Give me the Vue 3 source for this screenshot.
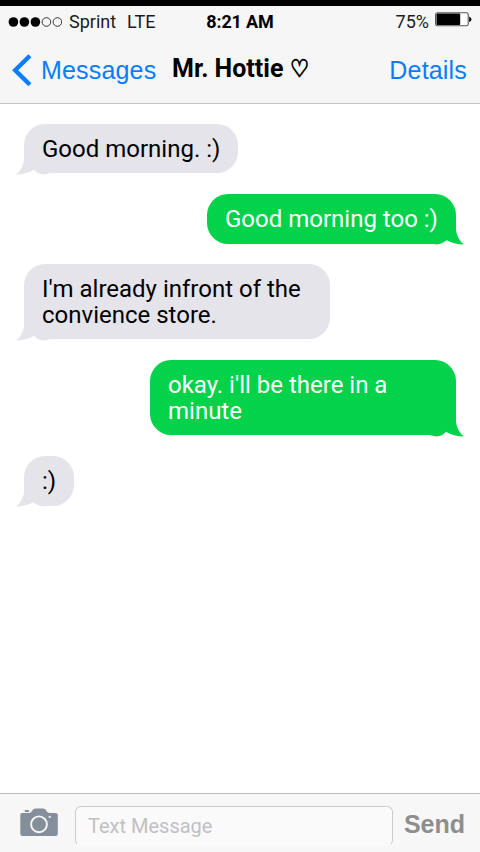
<script setup>
const messages = [
  { side: 'in', lines: ['Good morning. :)'], width: 214 },
  { side: 'out', lines: ['Good morning too :)'], width: 249, tall: true },
  { side: 'in', lines: ["I'm already infront of the", 'convience store.'], width: 306 },
  { side: 'out', lines: ["okay. i'll be there in a", 'minute'], width: 306 },
  { side: 'in', lines: [':)'], width: 50, tall: true },
]
</script>

<template>
  <div class="phone">
    <header class="header">
      <div class="status">
        <div class="carrier">
          <svg class="signal" width="54" height="12" viewBox="0 0 54 12">
            <circle cx="5.4" cy="6" r="4.8" />
            <circle cx="16.4" cy="6" r="4.8" />
            <circle cx="27.4" cy="6" r="4.8" />
            <circle class="hollow" cx="38.4" cy="6" r="4.3" />
            <circle class="hollow" cx="49.4" cy="6" r="4.3" />
          </svg>
          <span class="name">Sprint</span>
          <span class="network">LTE</span>
        </div>
        <div class="clock">8:21 AM</div>
        <div class="power">
          <span class="percent">75%</span>
          <svg width="37" height="15" viewBox="0 0 37 15">
            <rect x="0.6" y="0.8" width="32.6" height="13" rx="1.8" fill="#fff" stroke="#555" stroke-width="1.1" />
            <rect x="1.5" y="1.6" width="23.7" height="11.4" rx="1" />
            <path d="M34.2 4.6 Q36.4 5.5 36.4 7.3 Q36.4 9.2 34.2 10.2Z" />
          </svg>
        </div>
      </div>
      <nav class="nav">
        <div class="back">
          <svg width="20" height="33" viewBox="0 0 20 33">
            <path d="M17.9 1.7 L3.2 16.2 L17.9 30.7" fill="none" stroke="#087dff" stroke-width="4.4" />
          </svg>
          <span class="link">Messages</span>
        </div>
        <h1 class="title">Mr. Hottie <span class="heart">♡</span></h1>
        <span class="link details">Details</span>
      </nav>
    </header>

    <main class="thread">
      <div
        v-for="(m, i) in messages"
        :key="i"
        class="bubble"
        :class="[m.side, { tall: m.tall }]"
        :style="{ width: m.width + 'px' }"
      >
        <div v-for="line in m.lines" :key="line" class="line">{{ line }}</div>
        <svg class="tail" width="36" height="24" viewBox="0 0 36 24">
          <path d="M8 0 V8 Q7 17 0 22.6 Q10 22.6 18 17.8 Q22 22.4 27 22.4 Q31 22.4 34 21 V0Z" />
        </svg>
      </div>
    </main>

    <footer class="composer">
      <svg class="camera" width="38" height="29" viewBox="0 0 38 29">
        <path d="M2 5 H9 Q11 5 12 3 L13 1.5 Q14 0.5 16 0.5 H23 Q25 0.5 26 2 L27.2 4 Q28 5 30 5 H35.5 Q37.8 5 37.8 7 V25.7 Q37.8 28 35.5 28 H2.5 Q0.3 28 0.3 25.7 V7 Q0.3 5 2 5Z" />
        <rect x="4.6" y="2.1" width="4.6" height="1.8" rx=".9" />
        <circle cx="19" cy="16.3" r="7.9" fill="none" stroke="#f7f7f7" stroke-width="1.9" />
        <circle cx="29.7" cy="8.9" r="1.1" fill="#f7f7f7" />
      </svg>
      <div class="field">Text Message</div>
      <span class="send">Send</span>
    </footer>
  </div>
</template>

<style>
body {
  margin: 0;
  background: #fff;
}
</style>

<style scoped>
.phone {
  width: 480px;
  height: 852px;
  display: flex;
  flex-direction: column;
  overflow: hidden;
  background: #fff;
  font-family: Roboto, sans-serif;
  color: #000;
}
.header {
  box-sizing: border-box;
  height: 104px;
  border-top: 6px solid #000;
  border-bottom: 1px solid #c4c4c4;
  background: #f6f6f6;
}
.status {
  display: grid;
  grid-template-columns: 1fr auto 1fr;
  align-items: center;
  height: 30px;
  padding: 0 8px;
  font-size: 18px;
}
.carrier {
  display: flex;
  align-items: center;
}
.signal {
  margin-top: 2px;
}
.name {
  margin-left: 7px;
}
.name,
.network,
.percent {
  color: #1c1c1c;
}
.network {
  margin-left: 11px;
}
.hollow {
  fill: none;
  stroke: #222;
  stroke-width: 0.9;
}
.clock {
  font-weight: 700;
  letter-spacing: -0.15px;
}
.power {
  display: flex;
  justify-content: flex-end;
  align-items: center;
  gap: 6px;
}
.power svg {
  margin-top: -3px;
}
.nav {
  display: flex;
  height: 69px;
  padding: 0 13px 0 12px;
  align-items: center;
}
.back {
  display: flex;
  align-items: center;
  gap: 9px;
  width: 160px;
}
.link {
  font-family: 'Liberation Sans', sans-serif;
  font-size: 25px;
  letter-spacing: 0.18px;
  color: #087dff;
}
.title {
  display: flex;
  align-items: center;
  gap: 6.5px;
  margin: -4px 0 0;
  font-size: 25px;
  font-weight: 700;
  line-height: 30px;
  white-space: nowrap;
}
.heart {
  font-family: 'DejaVu Sans', sans-serif;
  font-size: 24px;
  font-weight: 400;
  line-height: 24px;
  -webkit-text-stroke: 1.1px #000;
  transform: scaleX(0.88);
  transform-origin: left center;
}
.details {
  margin-left: auto;
}
.thread {
  flex: 1;
  display: flex;
  flex-direction: column;
  gap: 21px;
  padding: 20px 24px 0;
}
.bubble {
  position: relative;
  box-sizing: border-box;
  padding: 12px 18px 11px;
  border-radius: 21px;
  font-size: 24px;
  line-height: 26px;
  white-space: nowrap;
}
.tall {
  padding-bottom: 12px;
  margin-bottom: -1px;
}
.in {
  align-self: flex-start;
  background: #e5e4ea;
}
.out {
  align-self: flex-end;
  background: #04d24b;
  color: #fff;
}
.line {
  position: relative;
  z-index: 1;
}
.tail {
  position: absolute;
  bottom: -3px;
  left: -8px;
  fill: #e5e4ea;
}
.tall .tail {
  bottom: -2px;
}
.out .tail {
  left: auto;
  right: -8px;
  fill: #04d24b;
  transform: scaleX(-1);
}
.composer {
  box-sizing: border-box;
  display: flex;
  align-items: flex-start;
  height: 59px;
  padding: 12px 15px 0 20px;
  border-top: 1px solid #bcbcbc;
  background: #f7f7f7;
}
.camera {
  margin-top: 2px;
  fill: #858e9b;
}
.field {
  box-sizing: border-box;
  width: 318px;
  height: 40px;
  margin-left: 17px;
  padding-left: 12px;
  border: 1px solid #cbcbcd;
  border-bottom-color: transparent;
  border-radius: 6px;
  background: #fafafa;
  color: #c0c0c4;
  font-size: 20px;
  line-height: 39px;
}
.send {
  margin-left: auto;
  font-family: 'Liberation Sans', sans-serif;
  font-size: 25px;
  font-weight: 700;
  line-height: 36px;
  color: #8e8e8e;
}
</style>
